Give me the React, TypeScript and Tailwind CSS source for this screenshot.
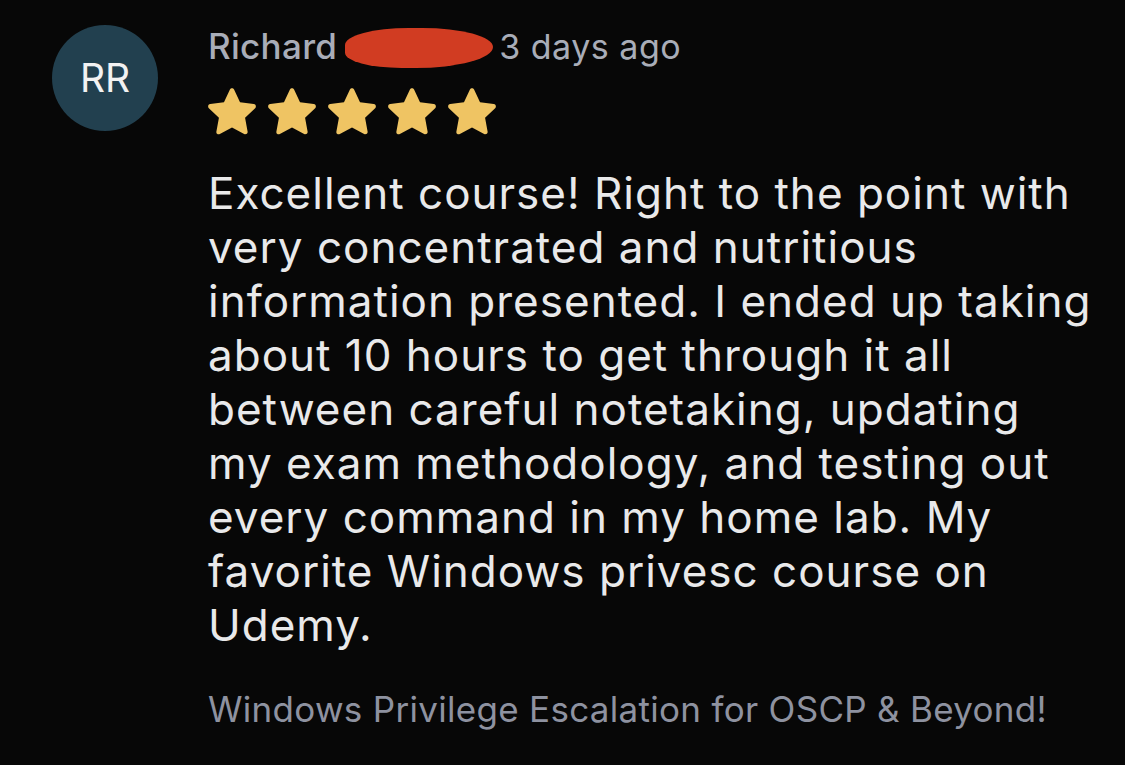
import React from 'react'

function Star() {
  return (
    <svg width="48" height="47" viewBox="1.6 1.7 20.8 20.5" className="shrink-0">
      <path
        d="M12 1.8c.4 0 .7.2.9.6l2.6 5.5 6 .8c.9.1 1.2 1.2.6 1.8l-4.4 4.2 1.1 6c.2.9-.8 1.5-1.5 1.1L12 18.9l-5.3 2.9c-.8.4-1.7-.2-1.5-1.1l1.1-6-4.4-4.2c-.6-.6-.3-1.7.6-1.8l6-.8 2.6-5.5c.2-.4.5-.6.9-.6z"
        fill="#efc463"
      />
    </svg>
  )
}

export default function App() {
  return (
    <div
      className="w-[1125px] h-[765px] bg-[#070707] flex gap-[50px] pl-[52px] pt-[25px] overflow-hidden"
      style={{ fontFamily: 'Inter, "Noto Sans", sans-serif' }}
    >
      <div className="w-[106px] h-[106px] rounded-full bg-[#22404f] flex items-center justify-center shrink-0">
        <span className="text-[#f2f2f2] text-[39px]">RR</span>
      </div>

      <div className="flex flex-col pt-[1px]">
        <div className="flex items-center h-[40px] text-[34px] text-[#a9adb8]">
          <span className="font-medium text-[35px] tracking-[0.3px]">Richard</span>
          <span className="relative ml-[8px] mr-[6px] w-[148px] h-[40px]">
            <span className="absolute left-[2px] bottom-[4px]">.</span>
            <span className="absolute left-0 top-[2px] w-[148px] h-[40px] rounded-[45%_50%_55%_40%] bg-[#d13c22]" />
          </span>
          <span className="tracking-[0.5px]">3 days ago</span>
        </div>

        <div className="flex gap-[12px] mt-[22px]">
          <Star />
          <Star />
          <Star />
          <Star />
          <Star />
        </div>

        <p className="mt-[31px] w-[884px] text-[44px] leading-[54px] tracking-[1px] text-[#e9e9ea]">
          Excellent course! Right to the point with very concentrated and nutritious information presented. I ended up
          taking about 10 hours to get through it all between careful notetaking, updating my exam methodology, and
          testing out every command in my home lab. My favorite Windows privesc course on Udemy.
        </p>

        <p className="mt-[31px] text-[35px] tracking-[0.3px] text-[#8e92a0]">
          Windows Privilege Escalation for OSCP &amp; Beyond!
        </p>
      </div>
    </div>
  )
}
